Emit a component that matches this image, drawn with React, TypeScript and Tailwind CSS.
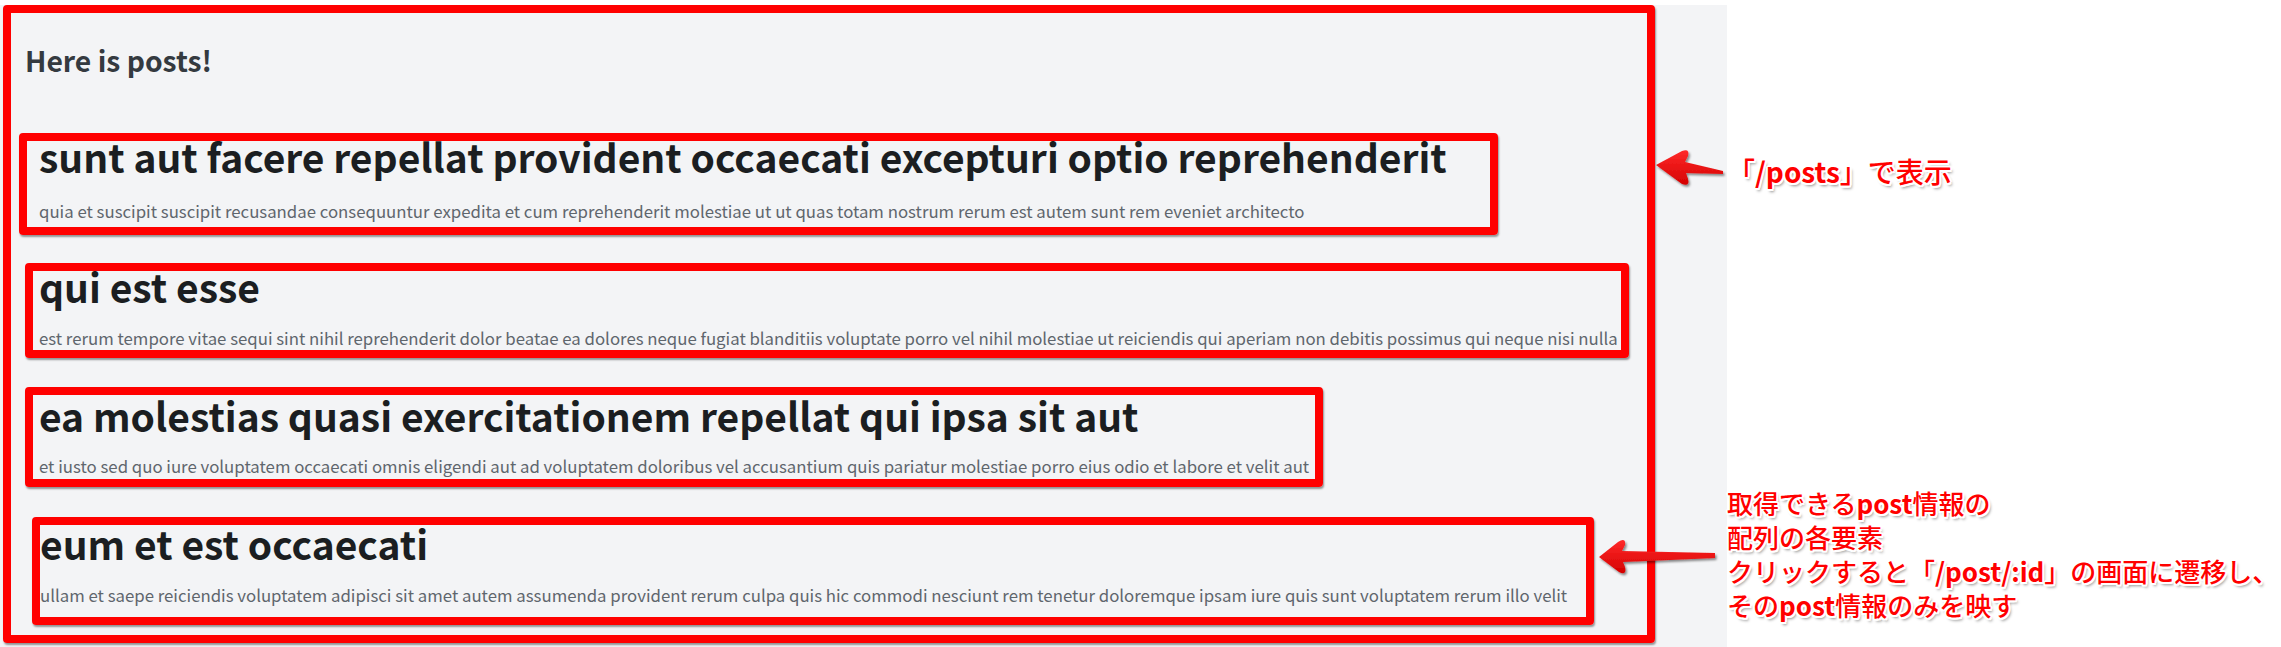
const posts = [
  {
    title: 'sunt aut facere repellat provident occaecati excepturi optio reprehenderit',
    body: 'quia et suscipit suscipit recusandae consequuntur expedita et cum reprehenderit molestiae ut ut quas totam nostrum rerum est autem sunt rem eveniet architecto',
    box: 'mt-0 ml-[8px] w-[1479px] h-[102px] pl-[12px]',
    titlePad: 'pt-0',
    gap: 'mt-[29px]',
  },
  {
    title: 'qui est esse',
    body: 'est rerum tempore vitae sequi sint nihil reprehenderit dolor beatae ea dolores neque fugiat blanditiis voluptate porro vel nihil molestiae ut reiciendis qui aperiam non debitis possimus qui neque nisi nulla',
    box: 'mt-[28px] ml-[14px] w-[1604px] h-[95px] pl-[6px]',
    titlePad: 'pt-0',
    gap: 'mt-[26px]',
  },
  {
    title: 'ea molestias quasi exercitationem repellat qui ipsa sit aut',
    body: 'et iusto sed quo iure voluptatem occaecati omnis eligendi aut ad voluptatem doloribus vel accusantium quis pariatur molestiae porro eius odio et labore et velit aut',
    box: 'mt-[29px] ml-[14px] w-[1298px] h-[100px] pl-[6px]',
    titlePad: 'pt-[5px]',
    gap: 'mt-[25px]',
  },
  {
    title: 'eum et est occaecati',
    body: 'ullam et saepe reiciendis voluptatem adipisci sit amet autem assumenda provident rerum culpa quis hic commodi nesciunt rem tenetur doloremque ipsam iure quis sunt voluptatem rerum illo velit',
    box: 'mt-[30px] ml-[21px] w-[1562px] h-[108px] pl-0',
    titlePad: 'pt-[3px]',
    gap: 'mt-[26px]',
  },
]

const outline =
  '[text-shadow:2px_0_0_#fff,-2px_0_0_#fff,0_2px_0_#fff,0_-2px_0_#fff,1.5px_1.5px_0_#fff,-1.5px_-1.5px_0_#fff,1.5px_-1.5px_0_#fff,-1.5px_1.5px_0_#fff,2px_3px_3px_rgba(0,0,0,0.45)]'

function PostCard({ post }: { post: (typeof posts)[number] }) {
  return (
    <div
      className={`${post.box} border-8 border-[#ff0000] rounded-[4px] shadow-[1px_2px_2px_rgba(0,0,0,0.4)] overflow-visible`}
    >
      <h1 className={`${post.titlePad} text-[39px] leading-[30px] font-bold text-[#1b1e21] whitespace-nowrap`}>
        {post.title}
      </h1>
      <p className={`${post.gap} text-[16.8px] leading-[22px] text-[#5f666d] whitespace-nowrap`}>{post.body}</p>
    </div>
  )
}

function Arrows() {
  return (
    <svg className="absolute inset-0 pointer-events-none" width="2281" height="647" viewBox="0 0 2281 647">
      <defs>
        <linearGradient id="arrowRed" x1="0" y1="0" x2="0" y2="1">
          <stop offset="0" stopColor="#ff2a2a" />
          <stop offset="1" stopColor="#d40000" />
        </linearGradient>
        <filter id="arrowShadow" x="-20%" y="-40%" width="140%" height="180%">
          <feDropShadow dx="1.5" dy="2" stdDeviation="1.2" floodColor="#000" floodOpacity="0.45" />
        </filter>
      </defs>
      <path
        d="M1656,165 L1682,151 Q1690,148 1688,156 L1685,162 L1723,171 L1723,174 L1686,173 L1688,179 Q1690,187 1682,184 Z"
        fill="url(#arrowRed)"
        filter="url(#arrowShadow)"
      />
      <path
        d="M1599,557 L1618,542 Q1626,537 1625,545 L1622,551 L1715,553 L1715,558 L1623,562 L1625,567 Q1627,576 1619,572 Z"
        fill="url(#arrowRed)"
        filter="url(#arrowShadow)"
      />
    </svg>
  )
}

export default function App() {
  return (
    <div className="relative flex w-[2281px] h-[647px] overflow-hidden bg-white font-['Noto_Sans_CJK_JP',sans-serif]">
      {/* page screenshot */}
      <div className="mt-[5px] w-[1727px] h-[642px] shrink-0 bg-[#f3f4f6]">
        <div className="ml-[3px] w-[1652px] h-[638px] border-8 border-[#ff0000] rounded-[4px] shadow-[1px_2px_2px_rgba(0,0,0,0.4)]">
          <div className="h-[120px] pt-[31px] pl-[14px]">
            <h2 className="text-[28.3px] leading-[31px] font-bold text-[#343a40]">Here is posts!</h2>
          </div>
          {posts.map((post) => (
            <PostCard key={post.title} post={post} />
          ))}
        </div>
      </div>

      {/* annotations */}
      <div className="flex flex-col text-[#ff0000]">
        <p className={`mt-[154px] text-[28px] leading-[34px] font-medium whitespace-nowrap ${outline}`}>
          「<span className="font-bold">/posts</span>」で表示
        </p>
        <p className={`mt-[298px] text-[26px] leading-[34px] font-medium whitespace-nowrap ${outline}`}>
          取得できる<span className="font-bold">post</span>情報の
          <br />
          配列の各要素
          <br />
          クリックすると「<span className="font-bold">/post/:id</span>」の画面に遷移し、
          <br />
          その<span className="font-bold">post</span>情報のみを映す
        </p>
      </div>

      <Arrows />
    </div>
  )
}
